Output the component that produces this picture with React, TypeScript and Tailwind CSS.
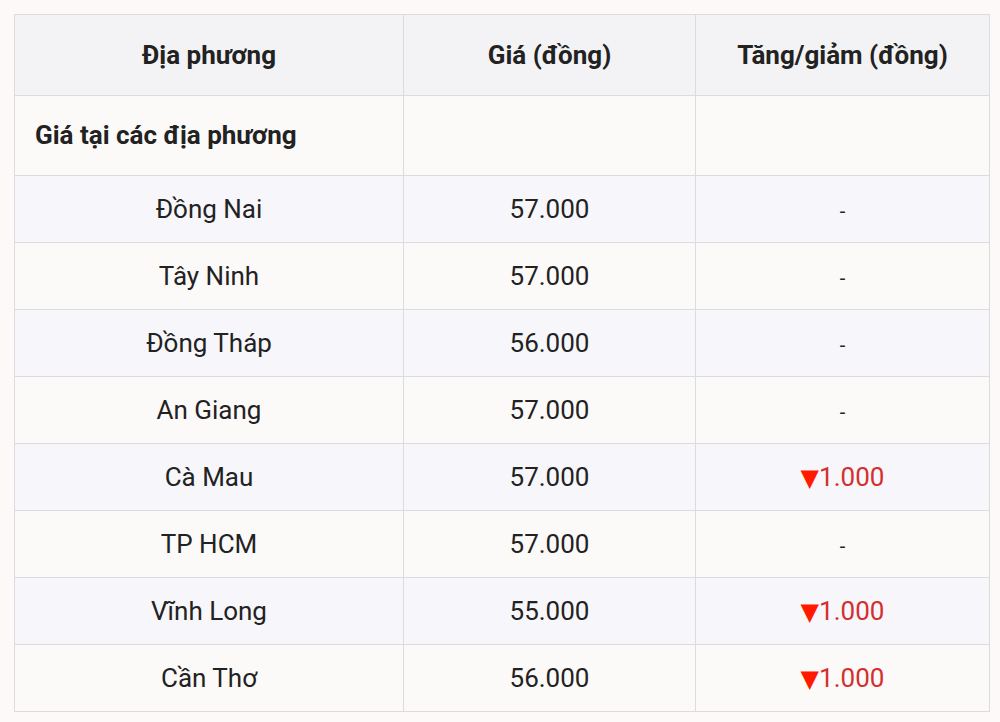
const rows = [
  { name: 'Đồng Nai', price: '57.000', change: '' },
  { name: 'Tây Ninh', price: '57.000', change: '' },
  { name: 'Đồng Tháp', price: '56.000', change: '' },
  { name: 'An Giang', price: '57.000', change: '' },
  { name: 'Cà Mau', price: '57.000', change: '1.000' },
  { name: 'TP HCM', price: '57.000', change: '' },
  { name: 'Vĩnh Long', price: '55.000', change: '1.000' },
  { name: 'Cần Thơ', price: '56.000', change: '1.000' },
];

export default function App() {
  return (
    <div
      className="w-[1000px] h-[722px] bg-[#fcf9f8] pt-[14px] pl-[14px] text-[#222222]"
      style={{ fontFamily: 'Roboto, "Noto Sans", sans-serif' }}
    >
      <table className="w-[975px] border-collapse table-fixed text-[26px]">
        <colgroup>
          <col className="w-[389px]" />
          <col className="w-[292px]" />
          <col className="w-[294px]" />
        </colgroup>
        <thead>
          <tr className="h-[81px] bg-[#f3f3f6]">
            <th className="border border-[#dcdcdf] font-bold text-center">Địa phương</th>
            <th className="border border-[#dcdcdf] font-bold text-center">Giá (đồng)</th>
            <th className="border border-[#dcdcdf] font-bold text-center">Tăng/giảm (đồng)</th>
          </tr>
        </thead>
        <tbody>
          <tr className="h-[80px] bg-[#fcf9f9]">
            <td className="border border-[#dcdcdf] font-bold text-left pl-[20px]">Giá tại các địa phương</td>
            <td className="border border-[#dcdcdf]"></td>
            <td className="border border-[#dcdcdf]"></td>
          </tr>
          {rows.map((r, i) => (
            <tr key={r.name} className={`h-[67px] ${i % 2 === 0 ? 'bg-[#f7f6fa]' : 'bg-[#fcf9f9]'}`}>
              <td className="border border-[#dcdcdf] text-center">{r.name}</td>
              <td className="border border-[#dcdcdf] text-center">{r.price}</td>
              <td className="border border-[#dcdcdf] text-center">
                {r.change ? (
                  <span className="text-[#d32f2f]">
                    <span
                      className="text-[#ff1a00] text-[24px]"
                      style={{ fontFamily: '"DejaVu Sans", sans-serif' }}
                    >
                      ▼
                    </span>
                    {r.change}
                  </span>
                ) : (
                  <span className="text-[20px]">-</span>
                )}
              </td>
            </tr>
          ))}
        </tbody>
      </table>
    </div>
  );
}
